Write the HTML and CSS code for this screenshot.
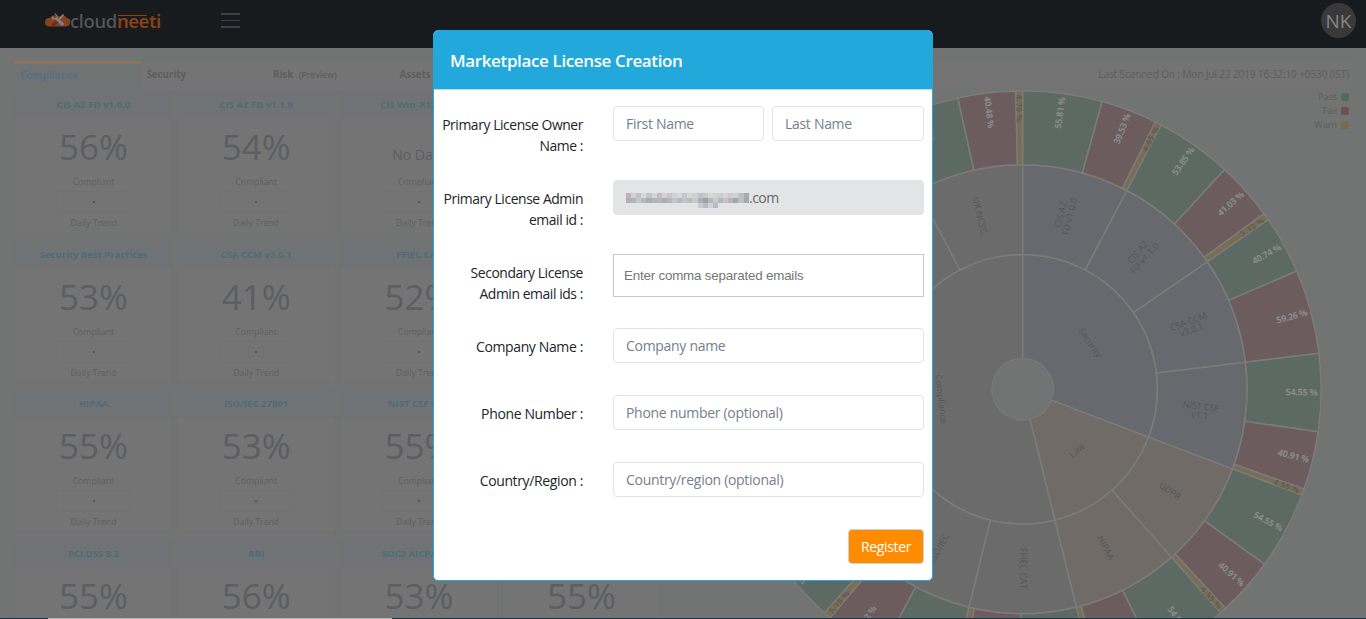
FILE: index.html
```html
<!DOCTYPE html>
<html lang="en">
<head>
<meta charset="utf-8">
<title>Cloudneeti</title>
<link rel="stylesheet" href="styles.css">
</head>
<body>
<div class="page">
  <header class="topbar">
    <div class="brand">
      <svg class="brand-mark" width="26" height="16" viewBox="0 0 26 16">
        <path d="M5 13.500C1.500 13.500 0 11.500 0 9C0 6 2.500 4.500 5 5C7 2 11 1.500 14 3.500C18 1.500 21 3 21.500 5C25 5 26 8 25 10C24.500 13 22 13.500 20 13.500Z" fill="#84431c"/>
        <path d="M7.500 13L14 6.500" stroke="#742927" stroke-width="3.200"/>
        <path d="M13 8L18.500 1.500" stroke="#85888c" stroke-width="1.600"/>
        <path d="M9 .5L12 3.500L10 5.500L7 3C6 5.500 8 7.500 10.500 6.500L17 13L19.500 11L12.500 4.500C13 2 11 .2 9 .5Z" fill="#7d7d84"/>
      </svg>
      <span class="brand-a">cloud</span><span class="brand-b">neeti</span>
    </div>
    <div class="burger"><i></i><i></i><i></i></div>
    <div class="avatar">NK</div>
  </header>
  <main class="board">
    <section class="left">
      <nav class="tabs"><span class="tab on">Compliance</span><span class="tab">Security</span><span class="tab">Risk <small>(Preview)</small></span><span class="tab">Assets</span></nav>
      <div class="cards" id="cards"></div>
    </section>
    <section class="right">
      <div class="scan"><span>Last Scanned On : Mon Jul 22 2019 16:32:10 +0530 (IST)</span></div>
      <ul class="legend"><li>Pass<i class="pass"></i></li><li>Fail<i class="fail"></i></li><li>Warn<i class="warn"></i></li></ul>
    </section>
  </main>
  <svg class="burst" id="burst" width="620" height="619" viewBox="712 0 620 619"></svg>
  <div class="bottomline"><i></i></div>
  <div class="modal">
    <div class="modal-head">Marketplace License Creation</div>
    <form class="form">
      <div class="row tall"><label>Primary License Owner<br>Name :</label><div class="pair"><div class="field">First Name</div><div class="field">Last Name</div></div></div>
      <div class="row tall"><label>Primary License Admin<br>email id :</label><div class="field locked"><span class="mosaic" id="mosaic"></span><span>.com</span></div></div>
      <div class="row tall"><label>Secondary License<br>Admin email ids :</label><div class="field plain">Enter comma separated emails</div></div>
      <div class="row"><label>Company Name :</label><div class="field">Company name</div></div>
      <div class="row"><label>Phone Number :</label><div class="field">Phone number (optional)</div></div>
      <div class="row"><label>Country/Region :</label><div class="field">Country/region (optional)</div></div>
      <div class="actions"><button type="button">Register</button></div>
    </form>
  </div>
</div>
<script src="script.js"></script>
</body>
</html>
```
FILE: styles.css
```css
* { box-sizing: border-box; }
body { margin: 0; font-family: "Open Sans", "Noto Sans", sans-serif; background: #717472; }
.page { position: relative; width: 1366px; height: 619px; overflow: hidden; }
.topbar { height: 48px; background: #171b1e; display: flex; align-items: flex-start; padding: 0 10px 0 45px; }
.brand { display: flex; width: 176px; font: 500 18.5px/24px "Noto Sans", sans-serif; letter-spacing: -.3px; padding-top: 9px; }
.brand-mark { margin: 4px -1px 0 0; flex: none; }
.brand-a { color: #54575a; }
.brand-b { color: #8a4214; font-weight: 600; letter-spacing: -.5px; background: linear-gradient(#8a4214, #8a4214) 1px 6px / 29px 1px no-repeat; }
.burger { display: flex; flex-direction: column; gap: 5px; padding-top: 13px; width: 19px; margin-left: -.5px; }
.burger i { height: 1.500px; background: #3a414b; }
.avatar { margin: 3px 0 0 auto; width: 35px; height: 35px; border-radius: 50%; background: #393939; color: #858585; font-size: 19px; line-height: 36px; text-align: center; }
.board { display: flex; padding: 13px 14px 0; justify-content: space-between; }
.left { width: 646px; }
.tabs { display: flex; height: 28px; background: #747474; margin-bottom: 2px; }
.tab { width: 126.500px; font-weight: 700; font-size: 9.700px; line-height: 27px; color: #5c5e5f; padding-left: 6px; }
.tab.on { background: #6f7374; color: #587080; border-top: 3px solid #89765a; line-height: 23px; font-size: 10px; }
.tab small { font-size: 8.500px; margin-left: 3px; font-weight: 600; }
.cards { display: grid; grid-template-columns: repeat(4, 159px); column-gap: 3.700px; row-gap: 7px; }
.card { height: 142.700px; background: #747474; border: 1px solid #707271; text-align: center; color: #5e6061; }
.card h3 { margin: 0; height: 27px; background: #707375; font-size: 9.500px; line-height: 25px; color: #4e6c78; }
.big { font-size: 35px; line-height: 48px; margin-top: 4px; height: 48px; color: #5c5e61; }
.big.none { font-size: 14px; line-height: 64px; }
.card p { margin: 0; font-size: 8.700px; line-height: 12px; }
.big + p { margin-top: 5px; }
.spark { width: 75px; height: 22px; margin: 3px auto 4px; border: 1px dotted #707070; display: grid; place-items: center; }
.spark i { width: 2px; height: 2px; background: #565656; }
.right { width: 690px; }
.scan { height: 27px; background: #747474; text-align: right; padding-right: 4px; font-size: 10px; letter-spacing: -.1px; line-height: 26px; color: #5c5e5e; margin-right: -1px; }
.legend { list-style: none; margin: 2px 3px 0; padding: 0; font-size: 9px; color: #5c5e5e; }
.legend li { display: flex; justify-content: flex-end; align-items: center; gap: 4px; height: 13.800px; }
.legend i { width: 8px; height: 8px; border-radius: 2px; margin-top: 1px; }
.pass { background: #526b5f; } .fail { background: #6d5052; } .warn { background: #7b6a4c; }
.burst { position: absolute; left: 712px; top: 0; }
.burst path { stroke: #7b7c7a; stroke-width: 1.500; }
.burst text { text-anchor: middle; font-size: 9px; fill: #545659; }
.burst .leaf { fill: #888c8c; font-weight: 700; }
.burst .leaf.dark { fill: #605c50; font-size: 8px; }
.bottomline { position: absolute; left: 0; right: 0; bottom: 0; height: 1px; background: #1c3340; padding-left: 48px; }
.bottomline i { display: block; width: 344px; height: 1px; background: #b4b4b4; }
.modal { position: absolute; left: 433px; top: 30px; width: 500px; height: 551px; background: #fff; border: 1px solid #22a8da; border-radius: 5px; overflow: hidden; }
.modal-head { height: 59px; background: #22a8da; border-bottom: 1px solid #b9dff0; color: #fff; font-size: 17px; font-weight: 600; line-height: 59px; padding-left: 16px; letter-spacing: -.37px; }
.form { padding: 16px 8px 0; font-size: 14px; color: #212529; }
.row { display: grid; grid-template-columns: 141px 311px; column-gap: 30px; height: 67px; align-items: start; }
.row.tall { height: 74px; }
.row label { line-height: 21px; padding-top: 8px; text-align: right; white-space: nowrap; letter-spacing: -.42px; }
.row.tall label { font-size: 13.900px; }
.row:not(.tall) label { letter-spacing: -.37px; }
.field { height: 35px; border: 1px solid #e1e3e6; border-radius: 4px; padding-left: 12px; line-height: 34px; color: #76808a; letter-spacing: -.3px; }
.pair { display: grid; grid-template-columns: 151px 152px; gap: 8px; }
.locked { background: #e3e4e6; display: flex; color: #5f6973; letter-spacing: -.55px; }
.plain { height: 43px; border-color: #c8c8c8; border-radius: 0; font: 13.333px/41px "Liberation Sans", sans-serif; padding-left: 10px; letter-spacing: -.18px; color: #757575; }
.mosaic { display: grid; grid-template-columns: repeat(24, 5.120px); grid-auto-rows: 5px; width: 123px; margin-top: 12px; }
.actions { display: flex; justify-content: flex-end; }
.actions button { width: 76px; height: 35px; border: 1px solid #ced1d4; border-radius: 4px; background: #ff8c00; color: #fff; font: 14px "Open Sans", sans-serif; padding: 0; letter-spacing: -.35px; }
```
FILE: script.js
```js
const cards = [
  ["CIS AZ FD v1.0.0", "56%"], ["CIS AZ FD v1.1.0", "54%"], ["CIS Win_R12 v1.0", "No Data"], null,
  ["Security Best Practices", "53%"], ["CSA CCM v3.0.1", "41%"], ["FFIEC CAT", "52%"], null,
  ["HIPAA", "55%"], ["ISO/IEC 27001", "53%"], ["NIST CSF v1.1", "55%"], null,
  ["PCI DSS 3.2", "55%"], ["RBI", "56%"], ["SOC2 AICPA TSC", "53%"], ["", "55%"]
];
document.getElementById("cards").innerHTML = cards.map((c, i) => {
  if (!c) return `<article class="card"></article>`;
  const trend = i < 12 ? `<p>Compliant</p><div class="spark"><i></i></div><p>Daily Trend</p>` : "";
  return `<article class="card"><h3>${c[0]}</h3><div class="big${c[1] === "No Data" ? " none" : ""}">${c[1]}</div>${trend}</article>`;
}).join("");

const cx = 1022.6, cy = 389.3, step = 360 / 13;
const R = [30.5, 134.8, 224.5, 298.5];
const pt = (r, a) => { const t = a * Math.PI / 180; return [cx + r * Math.sin(t), cy - r * Math.cos(t)]; };
const wedge = (r0, r1, a, b, fill) => {
  const big = b - a > 180 ? 1 : 0;
  return `<path fill="${fill}" d="M${pt(r1, a)}A${r1} ${r1} 0 ${big} 1 ${pt(r1, b)}L${pt(r0, b)}A${r0} ${r0} 0 ${big} 0 ${pt(r0, a)}Z"/>`;
};
const label = (lines, r, a, rot, cls = "", w = 0) => {
  const [x, y] = pt(r, a);
  return `<g transform="translate(${x} ${y}) rotate(${rot})">` + lines.map((t, i) =>
    `<text class="${cls}" y="${3 + (i - (lines.length - 1) / 2) * 9}"${w ? ` textLength="${w}"` : ""}>${t}</text>`).join("") + "</g>";
};
const frameworks = [
  [["CIS AZ", "FD v1.0.0"], [55.81, 39.53, 4.65]],
  [["CIS AZ", "FD v1.1.0"], [53.85, 41.03, 5.13]],
  [["CSA CCM", "v3.0.1"], [40.74, 59.26, 0]],
  [["NIST CSF", "v1.1"], [54.55, 40.91, 4.55]],
  [["GDPR"], [54.55, 40.91, 4.55]],
  [["HIPAA"], [54.55, 40.91, 4.55]],
  [["FFIEC CAT"], [51.72, 43.10, 5.17]],
  [["ISO/IEC"], [52.63, 42.22, 5.15]],
  [["PCI DSS"], [54.55, 40.91, 4.55]],
  [["RBI"], [55.56, 40.74, 3.70]],
  [["SOC2"], [53.33, 42.22, 4.44]],
  [["NIST"], [54.55, 40.91, 4.55]],
  [["UK NCSC"], [54.76, 40.48, 4.76]]
];
const leafColors = ["#5d6963", "#6c5c5d", "#7b6d54"];
let out = "", text = "";
[["Security", 0, 4, "#68696f"], ["Law", 4, 6, "#716b67"], ["Compliance", 6, 13, "#6b6b6b"]].forEach(([name, s, e, color]) => {
  out += wedge(R[0], R[1], s * step, e * step, color);
  const m = (s + e) / 2 * step;
  text += label([name], 82, m, m > 90 ? m - 180 : m);
  for (let i = s; i < e; i++) {
    const [title, parts] = frameworks[i];
    const mid = (i + .5) * step;
    out += wedge(R[1], R[2], i * step, (i + 1) * step, color);
    text += label(title, 179, mid, mid > 181 ? mid + 90 : mid - 90);
    let a = i * step;
    parts.forEach((p, k) => {
      if (!p) return;
      const b = a + p / 100 * step, q = (a + b) / 2;
      out += wedge(R[2], R[3], a, b, leafColors[k]);
      if (q < 165 || q > 208) text += label([p.toFixed(2) + " %"], k === 2 ? 281 : 279, q, q > 180 ? q + 90 : q - 90, k === 2 ? "leaf dark" : "leaf", k === 2 ? 27 : 32);
      a = b;
    });
  }
});
document.getElementById("burst").innerHTML = out + `<circle cx="${cx}" cy="${cy}" r="30.500" fill="#717472"/>` + text;

const tones = [
  "b9b5b8 d0d2d4 c5c2c6 d6d7d9 c6c3c7 d2d4d7 c0bdc0 d4d1d2 c9c4c8 cfd3d6 d6d8da c5c8ca d5d7d9 d2cfd2 bfc3c8 c4c8cb d8d8d9 d0d3d5 c9ccd1 d6d5d6 cbcdd0 d0d2d2 bebfc0 a8abaf",
  "b2aeb4 aeb4be c5c8cc b9b6be a9adb6 b6b2b8 bab5bb b0abb0 b5b8be c2c6ca b6bac1 c1c5c9 bfbbc0 c8cacd b2aeb5 9ba3ab b4b7bb c9c8ca b3b7be c2c4c8 b8b4b9 9fa5b1 bdc1bd a5a8ae",
  "- - - - - - - - - - - - - - c9cbce b9bdc3 d1d2d4 b9bbc0 - - - - - -"
];
document.getElementById("mosaic").innerHTML = tones.join(" ").split(" ").map(c =>
  `<i style="background:${c === "-" ? "transparent" : "#" + c}"></i>`).join("");
```
